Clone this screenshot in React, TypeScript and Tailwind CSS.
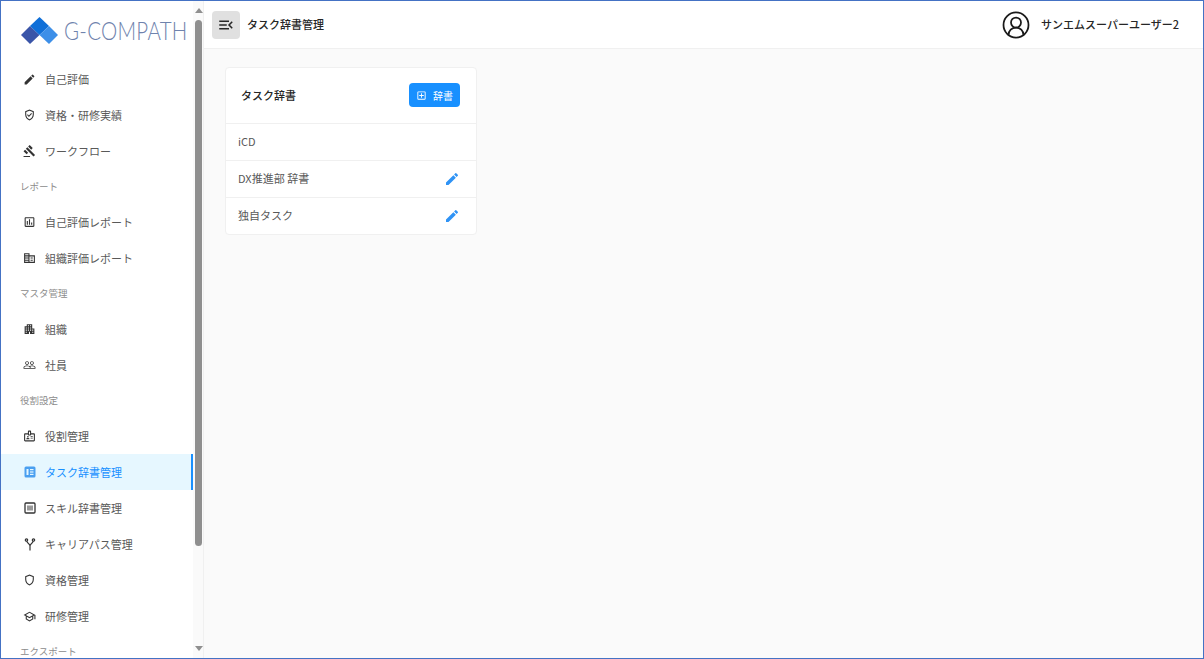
import React from 'react';
import {
  MdEdit,
  MdOutlineGppGood,
  MdGavel,
  MdOutlineAssessment,
  MdOutlineCorporateFare,
  MdApartment,
  MdPeopleOutline,
  MdOutlineBadge,
  MdOutlineShield,
  MdOutlineSchool,
  MdMenuOpen,
  MdOutlineAddBox,
} from 'react-icons/md';
import { CircleUserRound } from 'lucide-react';

const font = { fontFamily: '"Noto Sans CJK JP", "Noto Sans", sans-serif' };

function Logo() {
  return (
    <div className="flex items-center h-[59px] pl-5 shrink-0">
      <svg width="37" height="28" viewBox="0 0 37 28" className="shrink-0">
        <polygon points="0,18 9,9 18.5,18 9,27" fill="#3a55a8" />
        <polygon points="9,9 18.5,0 28,9 18.5,18" fill="#0f6fd8" />
        <polygon points="18.5,18 28,9 37,18 28,27" fill="#3d8fe8" />
      </svg>
      <span
        className="ml-[6px] text-[20.5px] font-light leading-none tracking-[0.25px] text-[#6f83ad] whitespace-nowrap scale-y-[1.25]"
        style={{ fontFamily: 'Lato, sans-serif' }}
      >
        G-COMPATH
      </span>
    </div>
  );
}

function TaskIcon() {
  return (
    <svg width="12" height="12" viewBox="0 0 12 12">
      <rect x="0.5" y="0.5" width="11" height="11" rx="1.5" fill="#4a9ff0" />
      <rect x="2.5" y="3" width="2" height="6" fill="#e6f7ff" />
      <rect x="6" y="3" width="3.5" height="1.2" fill="#e6f7ff" />
      <rect x="6" y="5.4" width="3.5" height="1.2" fill="#e6f7ff" />
      <rect x="6" y="7.8" width="3.5" height="1.2" fill="#e6f7ff" />
    </svg>
  );
}

function SkillIcon() {
  return (
    <svg width="12" height="12" viewBox="0 0 12 12" fill="none" stroke="currentColor">
      <rect x="1" y="1" width="10" height="10" rx="1" strokeWidth="1.3" />
      <path d="M4 3.5v5M6 3.5v5M8 3.5v5" strokeWidth="1" />
    </svg>
  );
}

function ForkIcon() {
  return (
    <svg width="12" height="13" viewBox="0 0 12 13" fill="none" stroke="currentColor" strokeWidth="1.2">
      <circle cx="2.5" cy="2" r="1.2" />
      <circle cx="9.5" cy="2" r="1.2" />
      <path d="M2.8 3.2C3.2 5.5 6 5.5 6 8v4.5M9.2 3.2C8.8 5.5 6 5.5 6 8" />
    </svg>
  );
}

function NavItem({ icon, label, active }: { icon: React.ReactNode; label: string; active?: boolean }) {
  return (
    <div
      className={
        active
          ? 'flex items-center h-9 shrink-0 pl-[22px] text-[11px] bg-[#e6f7ff] text-[#1890ff] border-r-2 border-[#1890ff]'
          : 'flex items-center h-9 shrink-0 pl-[22px] text-[11px] text-[#595959]'
      }
    >
      <span className="w-[13px] flex justify-center text-[#333333]">{icon}</span>
      <span className="ml-[9px] whitespace-nowrap">{label}</span>
    </div>
  );
}

function SectionLabel({ label }: { label: string }) {
  return (
    <div className="flex items-center h-[35px] shrink-0 pl-[19px] text-[9.5px] text-[#8c8c8c]">{label}</div>
  );
}

function Scrollbar() {
  return (
    <div className="w-[11px] shrink-0 bg-[#fafafa] flex flex-col items-center">
      <div className="mt-[7px] w-0 h-0 border-l-4 border-r-4 border-b-[5px] border-l-transparent border-r-transparent border-b-[#8f8f8f]" />
      <div className="mt-[7px] w-[7px] h-[526px] rounded-full bg-[#8f8f8f] shrink-0" />
      <div className="mt-[100px] w-0 h-0 border-l-4 border-r-4 border-t-[5px] border-l-transparent border-r-transparent border-t-[#8f8f8f]" />
    </div>
  );
}

function Sidebar() {
  return (
    <aside className="w-[203px] shrink-0 flex border-r border-[#f0f0f0] bg-white overflow-hidden">
      <div className="w-[192px] shrink-0 flex flex-col overflow-hidden">
        <Logo />
        <div className="h-px shrink-0" />
        <NavItem icon={<MdEdit size={13} />} label="自己評価" />
        <NavItem icon={<MdOutlineGppGood size={14} />} label="資格・研修実績" />
        <NavItem icon={<MdGavel size={14} />} label="ワークフロー" />
        <SectionLabel label="レポート" />
        <NavItem icon={<MdOutlineAssessment size={14} />} label="自己評価レポート" />
        <NavItem icon={<MdOutlineCorporateFare size={14} />} label="組織評価レポート" />
        <SectionLabel label="マスタ管理" />
        <NavItem icon={<MdApartment size={14} />} label="組織" />
        <NavItem icon={<MdPeopleOutline size={14} />} label="社員" />
        <SectionLabel label="役割設定" />
        <NavItem icon={<MdOutlineBadge size={14} />} label="役割管理" />
        <NavItem icon={<TaskIcon />} label="タスク辞書管理" active />
        <NavItem icon={<SkillIcon />} label="スキル辞書管理" />
        <NavItem icon={<ForkIcon />} label="キャリアパス管理" />
        <NavItem icon={<MdOutlineShield size={14} />} label="資格管理" />
        <NavItem icon={<MdOutlineSchool size={15} />} label="研修管理" />
        <SectionLabel label="エクスポート" />
      </div>
      <Scrollbar />
    </aside>
  );
}

function Header() {
  return (
    <header className="h-[48px] shrink-0 bg-white border-b border-[#f0f0f0] flex items-center pl-2 pr-6">
      <button className="w-7 h-7 rounded-sm bg-[#e0e0e0] flex items-center justify-center text-[#262626]">
        <MdMenuOpen size={18} />
      </button>
      <span className="ml-[7px] text-[11px] font-medium text-[#262626]">タスク辞書管理</span>
      <div className="ml-auto flex items-center">
        <CircleUserRound size={30} strokeWidth={1.4} className="text-[#1a1a1a]" />
        <span className="ml-[10px] text-[11px] font-medium text-[#262626]">サンエムスーパーユーザー2</span>
      </div>
    </header>
  );
}

function DictRow({ label, editable }: { label: string; editable?: boolean }) {
  return (
    <div className="h-[37px] flex items-center justify-between pl-[12px] pr-4 pb-px border-t border-[#f0f0f0] text-[11px] text-[#595959]">
      <span>{label}</span>
      {editable && <MdEdit size={16} className="text-[#2f93f5]" />}
    </div>
  );
}

export default function App() {
  return (
    <div className="w-[1204px] h-[659px] border border-[#4472c4] flex overflow-hidden bg-[#fafafa]" style={font}>
      <Sidebar />
      <div className="flex-1 flex flex-col min-w-0">
        <Header />
        <main className="flex-1 pt-[18px] pl-[21px]">
          <div className="w-[252px] bg-white border border-[#f0f0f0] rounded-sm">
            <div className="h-[55px] flex items-center justify-between pl-[15px] pr-4 pb-px">
              <span className="text-[11px] font-medium text-[#262626]">タスク辞書</span>
              <button className="w-[51px] h-6 rounded-sm bg-[#1890ff] text-white text-[10px] flex items-center justify-center">
                <MdOutlineAddBox size={11} />
                <span className="ml-[6px]">辞書</span>
              </button>
            </div>
            <DictRow label="iCD" />
            <DictRow label="DX推進部 辞書" editable />
            <DictRow label="独自タスク" editable />
          </div>
        </main>
      </div>
    </div>
  );
}
